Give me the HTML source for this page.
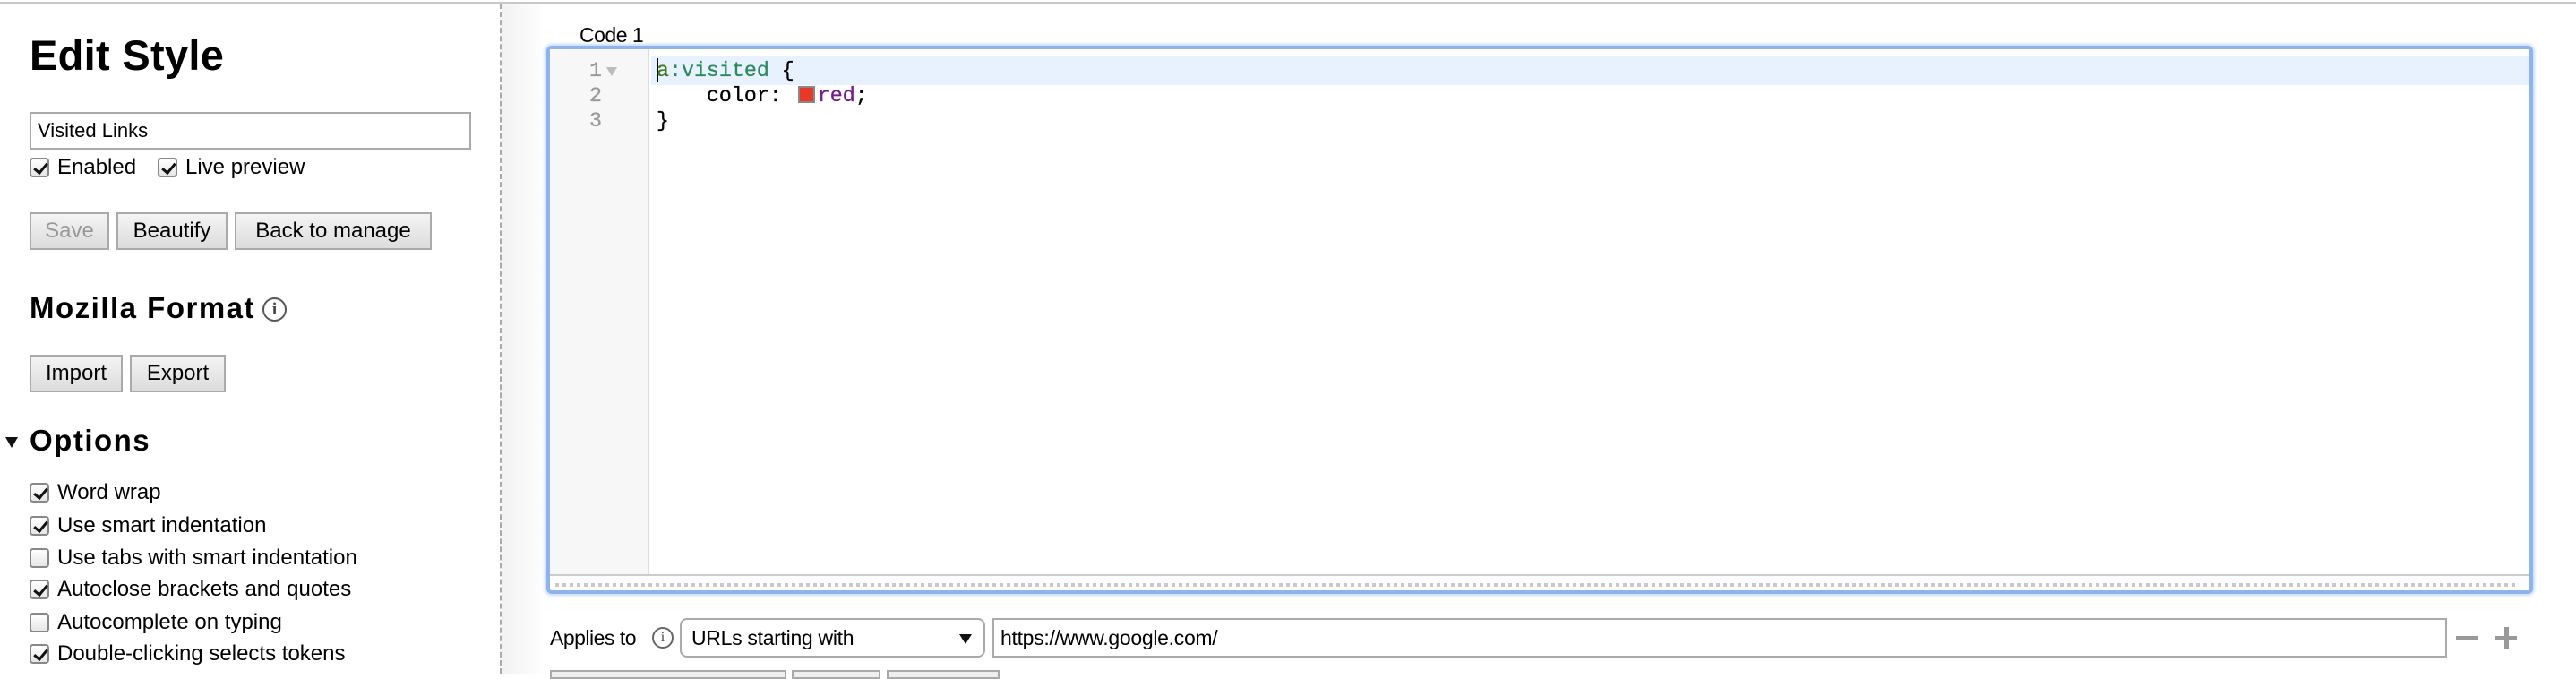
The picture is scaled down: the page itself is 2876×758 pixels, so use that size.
<!DOCTYPE html>
<html><head><meta charset="utf-8"><style>
*{margin:0;padding:0;box-sizing:border-box}
body{width:2876px;height:752px;overflow:hidden;background:#fff;font-family:"Liberation Sans",Arial,sans-serif;color:#000;position:relative}
.a{position:absolute}
.topline{left:0;top:2px;width:2876px;height:2px;background:#c8c8c8}
.dash{left:558px;top:4px;height:748px;border-left:3px dashed #aaa}
.shade{left:561px;top:4px;width:50px;height:748px;background:linear-gradient(to right,#f2f2f2,#fff)}
h1{position:absolute;left:33px;top:34px;font-size:47px;font-weight:bold;line-height:56px;letter-spacing:0.3px}
.inp{border:2px solid #aaa;background:#fff}
.cb{position:absolute;width:22px;height:22px;border:2px solid #888;border-radius:4px;background:linear-gradient(#fff,#e6e6e6)}
.cb.c::after{content:"";position:absolute;left:6px;top:1px;width:6px;height:12px;border:solid #111;border-width:0 3px 3px 0;transform:rotate(40deg)}
.lbl{position:absolute;font-size:24px;line-height:26px}
.btn{position:absolute;border:2px solid #aaa;background:linear-gradient(#f4f4f4,#dcdcdc);font-size:24px;text-align:center;line-height:38px;height:42px}
h2{position:absolute;font-size:33px;font-weight:bold;line-height:36px;letter-spacing:1.5px}
.info{position:absolute;border:2px solid #555;border-radius:50%;text-align:center;font-family:"Liberation Serif",serif;color:#444;font-weight:bold}
.code{font-family:"Liberation Mono",monospace;font-size:23.3px;line-height:28px;white-space:pre;-webkit-text-stroke:0.3px currentColor}
</style></head><body>
<div class="a topline"></div>
<div class="a shade"></div>
<div class="a dash"></div>

<h1>Edit Style</h1>
<div class="a inp" style="left:33px;top:125px;width:493px;height:42px"></div>
<div class="a" style="left:42px;top:130px;font-size:22px;line-height:32px">Visited Links</div>
<div class="cb c" style="left:33px;top:176px"></div><div class="lbl" style="left:64px;top:174px">Enabled</div>
<div class="cb c" style="left:176px;top:176px"></div><div class="lbl" style="left:207px;top:174px">Live preview</div>

<div class="btn" style="left:33px;top:237px;width:89px;color:#999">Save</div>
<div class="btn" style="left:130px;top:237px;width:124px">Beautify</div>
<div class="btn" style="left:262px;top:237px;width:220px">Back to manage</div>

<h2 style="left:33px;top:326px">Mozilla Format</h2>
<div class="info" style="left:293px;top:332px;width:27px;height:27px;font-size:19px;line-height:23px">i</div>

<div class="btn" style="left:33px;top:396px;width:104px">Import</div>
<div class="btn" style="left:145px;top:396px;width:107px">Export</div>

<div class="a" style="left:6px;top:488px;width:0;height:0;border-left:7px solid transparent;border-right:7px solid transparent;border-top:12px solid #111"></div>
<h2 style="left:33px;top:474px">Options</h2>

<div class="cb c" style="left:33px;top:539px"></div><div class="lbl" style="left:64px;top:537px">Word wrap</div>
<div class="cb c" style="left:33px;top:576px"></div><div class="lbl" style="left:64px;top:574px">Use smart indentation</div>
<div class="cb" style="left:33px;top:612px"></div><div class="lbl" style="left:64px;top:610px">Use tabs with smart indentation</div>
<div class="cb c" style="left:33px;top:647px"></div><div class="lbl" style="left:64px;top:645px">Autoclose brackets and quotes</div>
<div class="cb" style="left:33px;top:684px"></div><div class="lbl" style="left:64px;top:682px">Autocomplete on typing</div>
<div class="cb c" style="left:33px;top:719px"></div><div class="lbl" style="left:64px;top:717px">Double-clicking selects tokens</div>

<div class="a" style="left:647px;top:25px;font-size:23px;line-height:28px;letter-spacing:-0.5px">Code 1</div>

<div class="a" style="left:610px;top:51px;width:2218px;height:612px;border:4px solid #8db4ee;border-radius:6px;box-shadow:0 0 3px 2px #c8dcf8;background:#fff">
  <div class="a" style="left:0;top:0;width:111px;height:586px;background:#f7f7f7;border-right:2px solid #ddd"></div>
  <div class="a" style="left:113px;top:8px;width:2097px;height:32px;background:#e8f2ff"></div>
  <div class="a code" style="left:44px;top:10px;color:#999">1
2
3</div>
  <div class="a" style="left:63px;top:20px;width:0;height:0;border-left:6px solid transparent;border-right:6px solid transparent;border-top:10px solid #bbb"></div>
  <div class="a" style="left:119px;top:10px;width:2px;height:26px;background:#000"></div>
  <div class="a code" style="left:119px;top:10px"><span style="color:#3d7a1e">a</span><span style="color:#2e8a5e">:visited</span> {
    color: <span style="display:inline-block;width:19px;height:19px;background:#e8382a;border:2px solid #888;vertical-align:-2px;margin-left:4px;margin-right:3px"></span><span style="color:#771a88">red</span>;
}</div>
  <div class="a" style="left:0;top:586px;width:2210px;height:2px;background:#ccc"></div>
  <div class="a" style="left:6px;top:596px;width:2190px;height:4px;background:repeating-linear-gradient(to right,#c8c8c8 0 4px,transparent 4px 8px)"></div>
</div>

<div class="a" style="left:614px;top:698px;font-size:23px;line-height:28px;letter-spacing:-0.5px">Applies to</div>
<div class="info" style="left:728px;top:700px;width:24px;height:24px;font-size:16px;line-height:20px;border-width:2px;border-color:#666;font-weight:normal">i</div>
<div class="a" style="left:759px;top:690px;width:341px;height:44px;border:2px solid #aaa;border-radius:8px;background:#fff"></div>
<div class="a" style="left:772px;top:697px;font-size:23px;line-height:30px;letter-spacing:-0.3px">URLs starting with</div>
<div class="a" style="left:1071px;top:708px;width:0;height:0;border-left:7px solid transparent;border-right:7px solid transparent;border-top:11px solid #111"></div>
<div class="a inp" style="left:1108px;top:690px;width:1624px;height:44px"></div>
<div class="a" style="left:1117px;top:697px;font-size:23px;line-height:30px;letter-spacing:-0.3px">https://www.google.com/</div>
<div class="a" style="left:2742px;top:710px;width:25px;height:5px;background:#999"></div>
<div class="a" style="left:2786px;top:710px;width:24px;height:5px;background:#999"></div>
<div class="a" style="left:2796px;top:700px;width:5px;height:24px;background:#999"></div>

<div class="a" style="left:614px;top:748px;width:264px;height:10px;border:2px solid #aaa;background:#eee"></div>
<div class="a" style="left:884px;top:748px;width:99px;height:10px;border:2px solid #aaa;background:#eee"></div>
<div class="a" style="left:990px;top:748px;width:126px;height:10px;border:2px solid #aaa;background:#eee"></div>
</body></html>
